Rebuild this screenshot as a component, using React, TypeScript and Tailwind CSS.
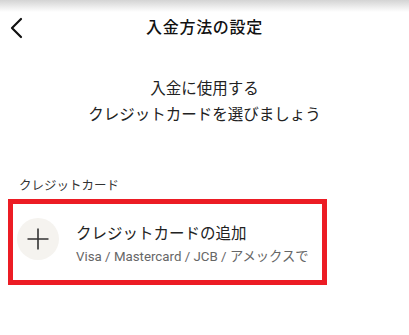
import React from "react";

export default function App() {
  return (
    <div
      className="relative w-[409px] h-[335px] overflow-hidden bg-white text-[#222]"
      style={{ fontFamily: 'Roboto, "Noto Sans CJK JP", sans-serif' }}
    >
      <div className="absolute left-0 top-0 w-full h-[12px] bg-gradient-to-b from-[#d4d4d4] to-white" />
      <header className="relative grid grid-cols-[40px_1fr_40px] items-center h-[56px]">
        <div className="flex items-center pl-[9px]">
          <svg width="14" height="22" viewBox="0 0 14 22" fill="none">
            <path d="M12 2 L3 11 L12 20" stroke="#111" strokeWidth="2.2" strokeLinecap="round" strokeLinejoin="round" />
          </svg>
        </div>
        <h1 className="text-center text-[16px] font-medium tracking-[0.7px] text-[#111]">入金方法の設定</h1>
        <div />
      </header>

      <div className="mt-[20px] text-center text-[15.5px] leading-[26px] text-[#222]">
        <p>入金に使用する</p>
        <p>クレジットカードを選びましょう</p>
      </div>

      <p className="mt-[50px] pl-[19px] text-[12.5px] leading-[16px] text-[#333]">クレジットカード</p>

      <div className="ml-[8px] mt-[5px] w-[319px] h-[86px] border-[5px] border-[#ec1c24]">
        <div className="flex items-start">
          <div className="ml-[4px] mt-[14px] w-[42px] h-[42px] rounded-full bg-[#f5f3ef] flex items-center justify-center shrink-0">
            <svg width="22" height="22" viewBox="0 0 22 22">
              <path d="M11 0.5 V21.5 M0.5 11 H21.5" stroke="#333" strokeWidth="1.6" />
            </svg>
          </div>
          <div className="ml-[17px] mt-[20px]">
            <p className="text-[15.5px] leading-[20px] text-[#222]">クレジットカードの追加</p>
            <p className="mt-[4px] text-[13.3px] leading-[18px] text-[#666]">Visa / Mastercard / JCB / アメックスで</p>
          </div>
        </div>
      </div>
    </div>
  );
}
